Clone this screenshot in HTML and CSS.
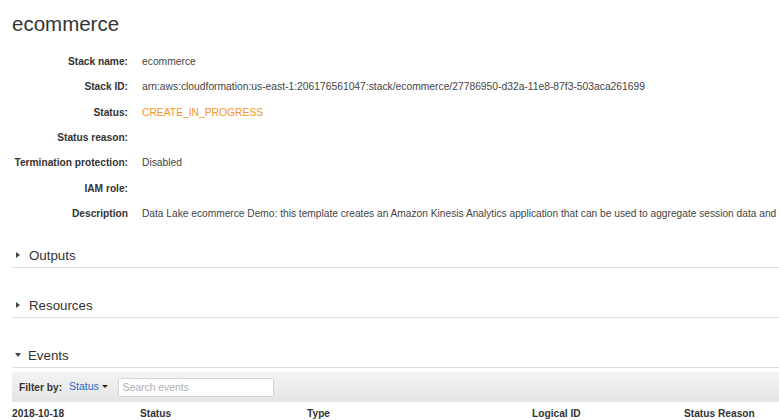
FILE: index.html
```html
<!DOCTYPE html>
<html>
<head>
<meta charset="utf-8">
<link rel="stylesheet" href="styles.css">
</head>
<body>
<div class="page">
  <h1 class="title">ecommerce</h1>
  <div class="details">
    <div class="label">Stack name:</div><div class="value">ecommerce</div>
    <div class="label">Stack ID:</div><div class="value">arn:aws:cloudformation:us-east-1:206176561047:stack/ecommerce/27786950-d32a-11e8-87f3-503aca261699</div>
    <div class="label">Status:</div><div class="value status">CREATE_IN_PROGRESS</div>
    <div class="label">Status reason:</div><div class="value"></div>
    <div class="label">Termination protection:</div><div class="value">Disabled</div>
    <div class="label">IAM role:</div><div class="value"></div>
    <div class="label">Description</div><div class="value desc">Data Lake ecommerce Demo: this template creates an Amazon Kinesis Analytics application that can be used to aggregate session data and</div>
  </div>

  <div class="section first"><span class="caret right"></span><span class="section-title">Outputs</span></div>
  <div class="section"><span class="caret right"></span><span class="section-title">Resources</span></div>
  <div class="section"><span class="caret down"></span><span class="section-title">Events</span></div>

  <div class="filter-bar">
    <span class="filter-label">Filter by:</span>
    <span class="filter-select">Status<span class="mini-caret"></span></span>
    <div class="search">Search events</div>
  </div>
  <div class="table-head">
    <div class="c1">2018-10-18</div>
    <div class="c2">Status</div>
    <div class="c3">Type</div>
    <div class="c4">Logical ID</div>
    <div class="c5">Status Reason</div>
  </div>
</div>
</body>
</html>
```

FILE: styles.css
```css
html, body {
  margin: 0;
  padding: 0;
  background: #fff;
  overflow: hidden;
}
body {
  font-family: "Liberation Sans", Arial, sans-serif;
  color: #444;
  width: 779px;
  height: 420px;
}
.page {
  padding-left: 12px;
  width: 900px;
}
.title {
  margin: 0;
  padding-top: 12px;
  font-size: 20.5px;
  line-height: 24px;
  font-weight: normal;
  color: #333;
}
.details {
  margin-top: 13px;
  display: grid;
  grid-template-columns: 116px 1fr;
  column-gap: 14px;
  grid-auto-rows: 25.33px;
  align-items: center;
  white-space: nowrap;
}
.label {
  text-align: right;
  font-weight: bold;
  font-size: 10.2px;
  color: #333;
}
.value {
  font-size: 10.3px;
  color: #444;
}
.value.desc {
  font-size: 10.2px;
}
.value.status {
  color: #f7931e;
}
.section {
  display: flex;
  align-items: center;
  height: 24px;
  border-bottom: 1px solid #ddd;
  margin-top: 25px;
}
.section.first {
  margin-top: 17px;
}
.caret {
  width: 0;
  height: 0;
  display: inline-block;
}
.caret.right {
  margin-left: 4px;
  margin-right: 9px;
  border-top: 3.5px solid transparent;
  border-bottom: 3.5px solid transparent;
  border-left: 4px solid #444;
}
.caret.down {
  margin-left: 3px;
  margin-right: 7px;
  border-left: 3.5px solid transparent;
  border-right: 3.5px solid transparent;
  border-top: 4px solid #444;
}
.section-title {
  font-size: 13.3px;
  color: #333;
}
.filter-bar {
  margin-top: 4px;
  height: 30px;
  display: flex;
  align-items: center;
  background: linear-gradient(#f3f3f3, #e5e5e5);
  padding-left: 7px;
}
.filter-label {
  font-weight: bold;
  font-size: 10.2px;
  color: #333;
}
.filter-select {
  margin-left: 7px;
  font-size: 10.5px;
  color: #2c68c4;
  display: inline-flex;
  align-items: center;
  position: relative;
  top: -1px;
}
.mini-caret {
  display: inline-block;
  margin-left: 3px;
  width: 0;
  height: 0;
  border-left: 3px solid transparent;
  border-right: 3px solid transparent;
  border-top: 3px solid #222;
}
.search {
  margin-left: 10px;
  width: 150px;
  height: 17px;
  border: 1px solid #d6d6d6;
  border-radius: 2px;
  background: #fff;
  font-size: 10.3px;
  line-height: 17px;
  color: #b0b0b0;
  padding-left: 4px;
}
.table-head {
  display: flex;
  height: 22px;
  align-items: center;
  font-weight: bold;
  font-size: 10.2px;
  color: #333;
  white-space: nowrap;
}
.c1 { width: 128px; }
.c2 { width: 167px; }
.c3 { width: 225px; }
.c4 { width: 152px; }
.c5 { width: 120px; }
```
